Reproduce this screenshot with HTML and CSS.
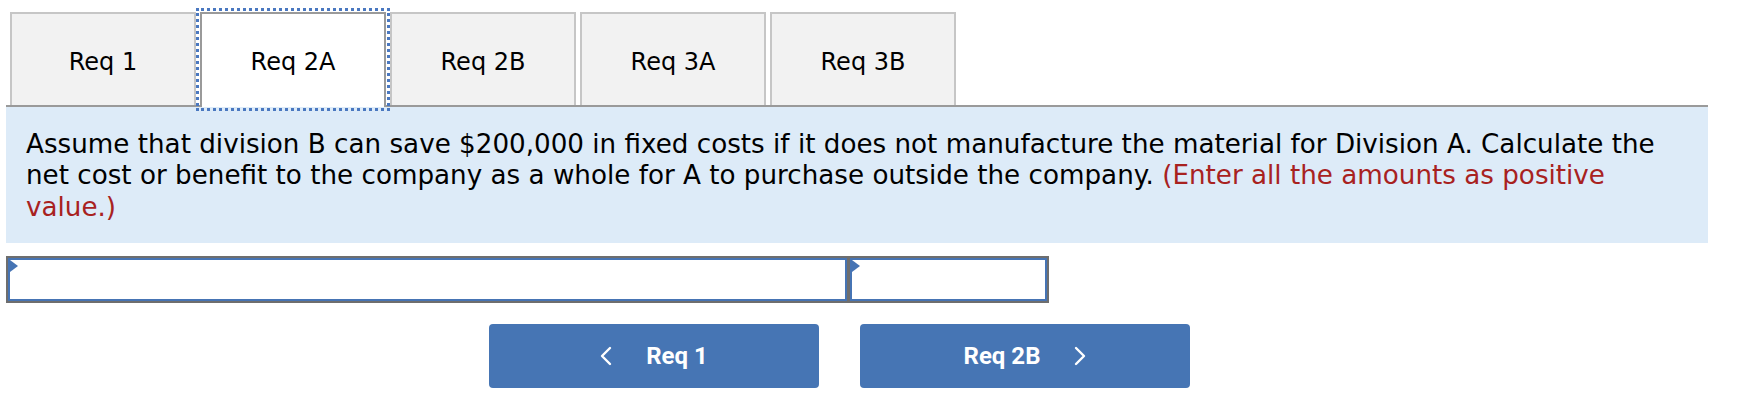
FILE: index.html
```html
<!DOCTYPE html>
<html>
<head>
<meta charset="utf-8">
<link rel="stylesheet" href="styles.css">
</head>
<body>
<div class="page">
  <div class="tabs">
    <div class="tab">Req 1</div>
    <div class="tab active">Req 2A</div>
    <div class="tab">Req 2B</div>
    <div class="tab">Req 3A</div>
    <div class="tab">Req 3B</div>
  </div>
  <div class="panel">
    <p class="question">Assume that division B can save $200,000 in fixed costs if it does not manufacture the material for Division A. Calculate the net cost or benefit to the company as a whole for A to purchase outside the company. <span class="hint">(Enter all the amounts as positive value.)</span></p>
  </div>
  <div class="answer">
    <div class="cell cell-wide"><span class="flag"></span></div>
    <div class="cell cell-narrow"><span class="flag"></span></div>
  </div>
  <div class="nav">
    <button class="navbtn"><svg class="chev" width="12" height="20" viewBox="0 0 12 20"><path d="M10 2 L2 10 L10 18" fill="none" stroke="#fff" stroke-width="2.4" stroke-linecap="round" stroke-linejoin="round"/></svg><span class="navlabel">Req 1</span></button>
    <button class="navbtn"><span class="navlabel">Req 2B</span><svg class="chev" width="12" height="20" viewBox="0 0 12 20"><path d="M2 2 L10 10 L2 18" fill="none" stroke="#fff" stroke-width="2.4" stroke-linecap="round" stroke-linejoin="round"/></svg></button>
  </div>
</div>
</body>
</html>
```
FILE: styles.css
```css
html, body {
  margin: 0;
  padding: 0;
  background: #ffffff;
}
.page {
  padding: 12px 48px 0 6px;
  font-family: "DejaVu Sans", Verdana, sans-serif;
  color: #000;
}
.tabs {
  display: flex;
  gap: 4px;
  padding-left: 4px;
  border-bottom: 2px solid #9a9a9a;
  height: 93px;
}
.tab {
  box-sizing: border-box;
  width: 186px;
  height: 93px;
  padding-top: 4px;
  background: #f2f2f2;
  border: 2px solid #c6c6c6;
  border-bottom: none;
  display: flex;
  align-items: center;
  justify-content: center;
  font-size: 24px;
}
.tab.active {
  background: #ffffff;
  border-color: #9a9a9a;
  height: 95px;
  padding-top: 2px;
  outline: 3px dotted #4a78c0;
  outline-offset: 1px;
  position: relative;
  z-index: 1;
}
.panel {
  background: #ddebf8;
  padding: 22px 30px 20px 20px;
}
.question {
  margin: 0;
  font-size: 26.2px;
  line-height: 31.4px;
}
.hint {
  color: #a8221f;
}
.answer {
  margin-top: 13px;
  display: flex;
  gap: 3px;
  width: max-content;
  padding: 2px;
  background: #6e6e6e;
}
.cell {
  position: relative;
  box-sizing: border-box;
  height: 43px;
  background: #fff;
  border: 2px solid #4674b4;
}
.cell-wide { width: 839px; }
.cell-narrow { width: 197px; }
.flag {
  position: absolute;
  left: 0;
  top: 0;
  width: 0;
  height: 0;
  border-top: 6px solid transparent;
  border-bottom: 6px solid transparent;
  border-left: 8px solid #4674b4;
}
.nav {
  margin-top: 21px;
  margin-left: 483px;
  display: flex;
  gap: 41px;
}
.navbtn {
  width: 330px;
  height: 64px;
  border: none;
  border-radius: 4px;
  background: #4675b4;
  color: #fff;
  font-family: Roboto, "Liberation Sans", sans-serif;
  font-weight: 700;
  font-size: 24px;
  display: flex;
  align-items: center;
  justify-content: center;
  gap: 34px;
  padding: 0;
}
.chev { display: block; }
```
